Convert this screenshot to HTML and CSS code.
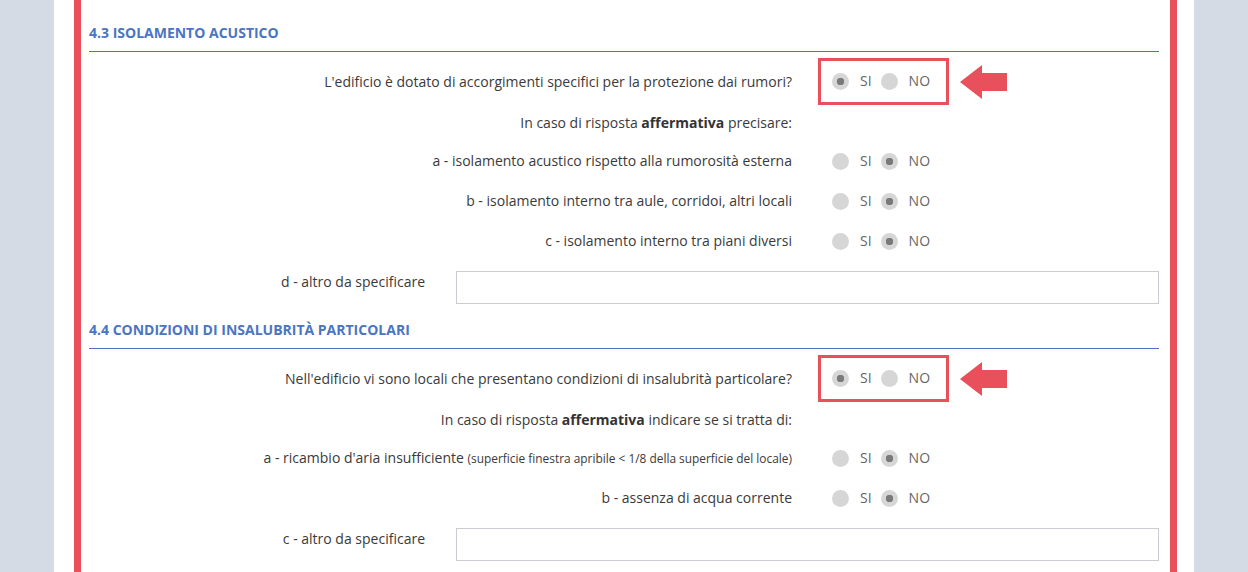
FILE: index.html
```html
<!DOCTYPE html>
<html lang="it">
<head>
<meta charset="UTF-8">
<meta name="viewport" content="width=device-width, initial-scale=1.0">
<title>Questionario edificio</title>
<link rel="stylesheet" href="styles.css">
</head>
<body>
<div class="page">
<div class="frame">

    <!-- 4.3 -->
    <h3 class="section-title">4.3 ISOLAMENTO ACUSTICO</h3>

    <div class="row row-marked">
        <div class="label">L'edificio è dotato di accorgimenti specifici per la protezione dai rumori?</div>
        <div class="choices marked">
            <input type="radio" name="q1" checked><span>SI</span>
            <input type="radio" name="q1"><span>NO</span>
            <svg class="arrow" width="47" height="34" viewBox="0 0 47 34"><polygon points="0,17 22,0 22,8 47,8 47,26 22,26 22,34" fill="#e8505b"/></svg>
        </div>
    </div>

    <div class="row row-info">
        <div class="label">In caso di risposta <b>affermativa</b> precisare:</div>
    </div>

    <div class="row">
        <div class="label">a - isolamento acustico rispetto alla rumorosità esterna</div>
        <div class="choices">
            <input type="radio" name="q1a"><span>SI</span>
            <input type="radio" name="q1a" checked><span>NO</span>
        </div>
    </div>

    <div class="row">
        <div class="label">b - isolamento interno tra aule, corridoi, altri locali</div>
        <div class="choices">
            <input type="radio" name="q1b"><span>SI</span>
            <input type="radio" name="q1b" checked><span>NO</span>
        </div>
    </div>

    <div class="row">
        <div class="label">c - isolamento interno tra piani diversi</div>
        <div class="choices">
            <input type="radio" name="q1c"><span>SI</span>
            <input type="radio" name="q1c" checked><span>NO</span>
        </div>
    </div>

    <div class="text-row">
        <label class="label">d - altro da specificare</label>
        <input type="text" class="text-field">
    </div>

    <!-- 4.4 -->
    <h3 class="section-title next">4.4 CONDIZIONI DI INSALUBRITÀ PARTICOLARI</h3>

    <div class="row row-marked">
        <div class="label">Nell'edificio vi sono locali che presentano condizioni di insalubrità particolare?</div>
        <div class="choices marked">
            <input type="radio" name="q2" checked><span>SI</span>
            <input type="radio" name="q2"><span>NO</span>
            <svg class="arrow" width="47" height="34" viewBox="0 0 47 34"><polygon points="0,17 22,0 22,8 47,8 47,26 22,26 22,34" fill="#e8505b"/></svg>
        </div>
    </div>

    <div class="row row-info">
        <div class="label">In caso di risposta <b>affermativa</b> indicare se si tratta di:</div>
    </div>

    <div class="row">
        <div class="label">a - ricambio d'aria insufficiente <small>(superficie finestra apribile &lt; 1/8 della superficie del locale)</small></div>
        <div class="choices">
            <input type="radio" name="q2a"><span>SI</span>
            <input type="radio" name="q2a" checked><span>NO</span>
        </div>
    </div>

    <div class="row">
        <div class="label">b - assenza di acqua corrente</div>
        <div class="choices">
            <input type="radio" name="q2b"><span>SI</span>
            <input type="radio" name="q2b" checked><span>NO</span>
        </div>
    </div>

    <div class="text-row">
        <label class="label">c - altro da specificare</label>
        <input type="text" class="text-field">
    </div>

</div>
</div>
</body>
</html>
```

FILE: styles.css
```css
html, body {
    height: 100%;
}
body {
    font-family: 'Open Sans', 'Liberation Sans', sans-serif;
    font-size: 14px;
    line-height: 20px;
    color: #3a3a3a;
    background-color: #d5dbe4;
    margin: 0;
    padding: 0;
    overflow: hidden;
}
.page {
    width: 1140px;
    min-height: 100%;
    margin: 0 auto;
    padding: 0 17px 0 20px;
    background-color: #fff;
    box-sizing: border-box;
}
.frame {
    min-height: 572px;
    border-left: 7px solid #e8505b;
    border-right: 7px solid #e8505b;
    padding: 23px 11px 0 8px;
    box-sizing: border-box;
}
.section-title {
    margin: 0;
    padding-bottom: 8px;
    border-bottom: 1px solid #4a73ba;
    font-size: 14px;
    line-height: 20px;
    font-weight: 700;
    color: #4a75c2;
}
.section-title.next {
    margin-top: 16px;
}

/* righe con SI / NO */
.row {
    display: grid;
    grid-template-columns: 703px 1fr;
    column-gap: 40px;
    align-items: center;
    height: 40px;
}
.row-marked {
    height: auto;
    margin-top: 6px;
}
.row-info {
    height: 36px;
}
.label {
    text-align: right;
}
.label b {
    font-weight: 700;
    color: #333;
}
.label small {
    font-size: 11.9px;
}
.choices {
    display: flex;
    align-items: center;
    color: #666;
}
.choices.marked {
    position: relative;
    justify-self: start;
    margin-left: -14px;
    padding: 10px 16px 11px 11px;
    border: 3px solid #e8505b;
}
.choices input[type="radio"] {
    -webkit-appearance: none;
    appearance: none;
    width: 17px;
    height: 17px;
    margin: 0 11px 0 0;
    border-radius: 50%;
    background-color: #d6d6d6;
}
.choices input[type="radio"]:checked {
    background: radial-gradient(circle, #7a7a7a 0 3.5px, #d6d6d6 4px);
}
.choices span {
    margin-right: 9px;
}
.choices span:last-of-type {
    margin-right: 0;
}
.arrow {
    position: absolute;
    left: calc(100% + 14px);
    top: 4px;
}

/* righe con campo di testo */
.text-row {
    display: grid;
    grid-template-columns: 336px 1fr;
    column-gap: 31px;
    margin-top: 10px;
}
.text-row .label {
    padding-top: 1px;
}
.text-field {
    height: 33px;
    margin: 0;
    border: 1px solid #c9ccd3;
    box-sizing: border-box;
    font-family: inherit;
}
```
